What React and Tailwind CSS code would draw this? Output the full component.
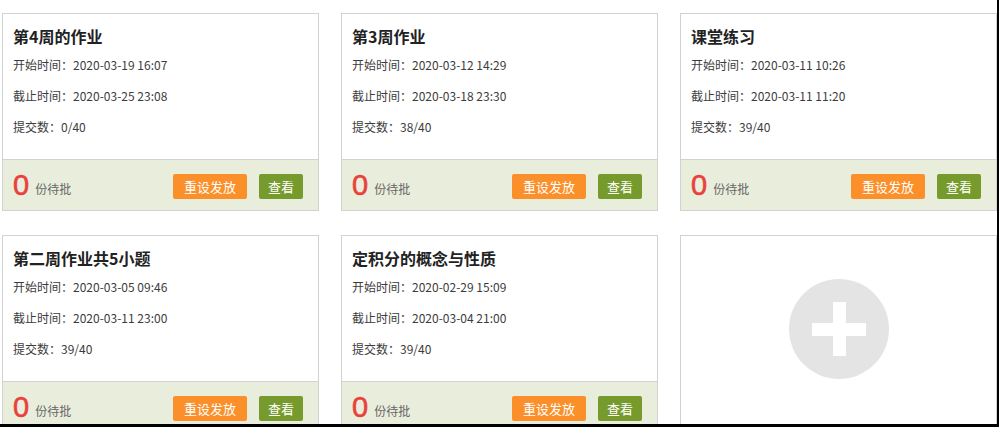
const tasks = [
  { title: '第4周的作业', start: '2020-03-19 16:07', end: '2020-03-25 23:08', count: '0/40' },
  { title: '第3周作业', start: '2020-03-12 14:29', end: '2020-03-18 23:30', count: '38/40' },
  { title: '课堂练习', start: '2020-03-11 10:26', end: '2020-03-11 11:20', count: '39/40' },
  { title: '第二周作业共5小题', start: '2020-03-05 09:46', end: '2020-03-11 23:00', count: '39/40' },
  { title: '定积分的概念与性质', start: '2020-02-29 15:09', end: '2020-03-04 21:00', count: '39/40' },
]

function TaskCard({ task }) {
  return (
    <div className="w-[317px] border border-[#d2d2d2] bg-white">
      <div className="h-[145px] px-[10px] pt-[12px]">
        <h3 className="text-[16px] leading-[20px] font-bold text-[#222]">{task.title}</h3>
        <div className="mt-[3px] text-[12px] text-[#3c3c3c]">
          <p className="h-[31px] leading-[31px]">开始时间：{task.start}</p>
          <p className="h-[31px] leading-[31px]">截止时间：{task.end}</p>
          <p className="h-[31px] leading-[31px]">提交数：{task.count}</p>
        </div>
      </div>
      <div className="flex h-[51px] items-center border-t border-[#d2d2d2] bg-[#e9eddc] pl-[10px] pr-[15px]">
        <span className="font-['Liberation_Sans',sans-serif] text-[29px] leading-none text-[#e8413b] [-webkit-text-stroke:0.6px_#e8413b]">0</span>
        <span className="ml-[6px] mt-[8px] text-[12px] text-[#666]">份待批</span>
        <button className="ml-auto mt-[3px] h-[25px] w-[74px] rounded-[2px] bg-[#fb8f2a] text-[13px] text-white">
          重设发放
        </button>
        <button className="ml-[12px] mt-[3px] h-[25px] w-[44px] rounded-[2px] bg-[#779a2d] text-[13px] text-white">
          查看
        </button>
      </div>
    </div>
  )
}

function AddCard() {
  return (
    <div className="h-[198px] w-[317px] border border-[#d2d2d2] bg-white pt-[43px]">
      <div className="mx-auto flex h-[100px] w-[100px] items-center justify-center rounded-full bg-[#e4e4e5]">
        <div className="relative h-[54px] w-[54px]">
          <div className="absolute left-[21px] top-0 h-[54px] w-[13px] bg-white" />
          <div className="absolute left-0 top-[21px] h-[13px] w-[54px] bg-white" />
        </div>
      </div>
    </div>
  )
}

export default function App() {
  return (
    <div className="h-[427px] w-[999px] overflow-hidden border-r-2 border-b-[3px] border-black bg-white font-['Microsoft_YaHei','Noto_Sans_CJK_SC',sans-serif]">
      <div className="grid grid-cols-[317px_317px_317px] gap-x-[22px] gap-y-[24px] pl-[2px] pt-[13px]">
        {tasks.map((t) => (
          <TaskCard key={t.title} task={t} />
        ))}
        <AddCard />
      </div>
    </div>
  )
}
